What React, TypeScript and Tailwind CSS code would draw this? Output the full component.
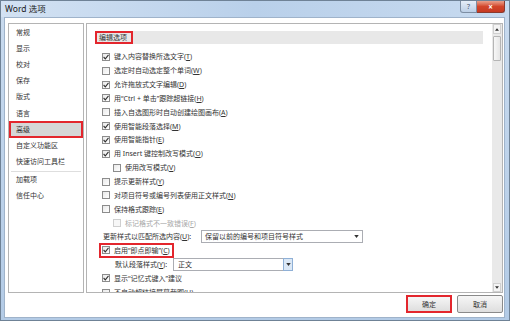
import React from "react";

const Check = ({ checked, disabled }: { checked?: boolean; disabled?: boolean }) => (
  <span
    className={`relative inline-block w-[8px] h-[8px] shrink-0 border ${
      disabled ? "border-[#cfcfcf] bg-[#f7f7f7]" : "border-[#8c8c8c] bg-gradient-to-br from-[#e9e9e9] to-white"
    }`}
  >
    {checked && (
      <svg viewBox="0 0 6 6" className="absolute left-0 top-0 w-[6px] h-[6px]">
        <path d="M0.6 3 L2.3 4.8 L5.5 0.8" fill="none" stroke="#333333" strokeWidth="1.1" />
      </svg>
    )}
  </span>
);

const Row = ({
  checked,
  children,
  indent,
  disabled,
}: {
  checked?: boolean;
  children: React.ReactNode;
  indent?: boolean;
  disabled?: boolean;
}) => (
  <div className={`h-[13.85px] flex items-center gap-[4px] ${indent ? "pl-[26px]" : "pl-[15px]"}`}>
    <Check checked={checked} disabled={disabled} />
    <span className={`whitespace-nowrap ${disabled ? "text-[#a8a8a8]" : ""}`}>{children}</span>
  </div>
);

const navItems = ["常规", "显示", "校对", "保存", "版式", "语言", "高级", "自定义功能区", "快速访问工具栏"];

export default function App() {
  return (
    <div className="w-[510px] h-[321px] overflow-hidden relative bg-gradient-to-b from-[#c9dbef] to-[#b3cbe6] border border-[#6f8296] font-['Noto_Sans','Noto_Sans_CJK_SC',sans-serif] text-[#333333] leading-none">
      {/* title bar */}
      <div className="h-[16px] flex items-center pl-[4px] text-[8.5px] text-[#1a1a1a] bg-gradient-to-r from-[#d3e2f3] via-[#b9d0ea] to-[#c7daef]">
        Word 选项
      </div>
      <div className="absolute top-0 right-[4px] flex">
        <div className="w-[17px] h-[12px] rounded-bl-[3px] border border-t-0 border-[#7d8ea3] bg-gradient-to-b from-[#e6eef8] to-[#bccfe6] flex items-center justify-center text-[7px] text-[#4a5a6e]">
          ?
        </div>
        <div className="w-[28px] h-[12px] rounded-br-[3px] border border-l-0 border-t-0 border-[#8a3a2e] bg-gradient-to-b from-[#e8a08c] via-[#d2452a] to-[#c63a22] flex items-center justify-center text-[8px] font-bold text-white">
          ×
        </div>
      </div>

      {/* inner */}
      <div className="ml-[3px] mr-[4px] h-[301px] bg-white border border-[#9fb3ca] pt-[5px] pl-[3px] text-[7px]">
        <div className="flex gap-[2px]">
          {/* nav */}
          <div className="w-[76px] h-[270px] border border-[#b4b4b4]">
            {navItems.map((t) => (
              <div key={t} className="h-[16.2px] flex items-center">
                {t === "高级" ? (
                  <div className="w-full h-[17px] border-2 border-[#e3262d] bg-[#d6d6d6] flex items-center pl-[5px]">
                    <span>{t}</span>
                  </div>
                ) : (
                  <span className="pl-[7px]">{t}</span>
                )}
              </div>
            ))}
            <div className="h-[2px] flex items-end px-[2px]">
              <div className="w-full h-[1px] bg-[#dedede]" />
            </div>
            {["加载项", "信任中心"].map((t) => (
              <div key={t} className="h-[16.2px] flex items-center pl-[7px]">
                {t}
              </div>
            ))}
          </div>

          {/* right panel */}
          <div className="w-[417px] h-[270px] border border-[#b4b4b4] flex overflow-hidden">
            <div className="flex-1 overflow-hidden">
              <div className="mt-[7px] ml-[8px] w-[388px] h-[13px] bg-[#e8e8e8] flex">
                <div className="h-[13px] w-[38px] border-2 border-[#e3262d] flex items-center pl-[2px] whitespace-nowrap">
                  编辑选项
                </div>
              </div>
              <div className="mt-[6px]">
                <Row checked>键入内容替换所选文字(<u>T</u>)</Row>
                <Row>选定时自动选定整个单词(<u>W</u>)</Row>
                <Row checked>允许拖放式文字编辑(<u>D</u>)</Row>
                <Row checked>用“Ctrl + 单击”跟踪超链接(<u>H</u>)</Row>
                <Row>插入自选图形时自动创建绘图画布(<u>A</u>)</Row>
                <Row checked>使用智能段落选择(<u>M</u>)</Row>
                <Row checked>使用智能指针(<u>E</u>)</Row>
                <Row checked>用 Insert 键控制改写模式(<u>O</u>)</Row>
                <Row indent>使用改写模式(<u>V</u>)</Row>
                <Row>提示更新样式(<u>Y</u>)</Row>
                <Row>对项目符号或编号列表使用正文样式(<u>N</u>)</Row>
                <Row>保持格式跟踪(<u>E</u>)</Row>
                <Row indent disabled>标记格式不一致错误(<u>F</u>)</Row>
                <div className="h-[13px] flex items-center pl-[16px]">
                  <span className="w-[98px] whitespace-nowrap">更新样式以匹配所选内容(<u>U</u>):</span>
                  <div className="w-[162px] h-[13px] border border-[#abadb3] flex items-center justify-between pl-[3px] pr-[3px]">
                    <span className="whitespace-nowrap">保留以前的编号和项目符号样式</span>
                    <svg viewBox="0 0 6 4" className="w-[5px] h-[3px]">
                      <path d="M0 0 H6 L3 4 Z" fill="#333" />
                    </svg>
                  </div>
                </div>
                <div className="h-[15px] flex items-center pl-[12px]">
                  <div className="h-[15px] inline-flex items-center gap-[4px] pl-[1px] pr-[2px] border-2 border-[#e3262d]">
                    <Check checked />
                    <span className="whitespace-nowrap">启用“即点即输”(<u>C</u>)</span>
                  </div>
                </div>
                <div className="h-[13px] flex items-center pl-[28px]">
                  <span className="w-[58px] whitespace-nowrap">默认段落样式(<u>Y</u>):</span>
                  <div className="w-[120px] h-[13px] border border-[#abadb3] flex items-center">
                    <span className="flex-1 pl-[4px]">正文</span>
                    <div className="w-[10px] h-[13px] -my-[1px] -mr-[1px] border border-[#8fb0d6] bg-[#dbe8f6] flex items-center justify-center">
                      <svg viewBox="0 0 6 4" className="w-[5px] h-[3px]">
                        <path d="M0 0 H6 L3 4 Z" fill="#333" />
                      </svg>
                    </div>
                  </div>
                </div>
                <div className="h-[15px] flex items-center gap-[4px] pl-[15px]">
                  <Check checked />
                  <span className="whitespace-nowrap">显示“记忆式键入”建议</span>
                </div>
                <Row>不自动超链接屏幕截图(<u>H</u>)</Row>
              </div>
            </div>
            {/* scrollbar */}
            <div className="w-[10px] h-full bg-[#e9e9e9] flex flex-col items-center">
              <div className="w-[8px] h-[10px] bg-[#f4f4f4] border border-[#d0d0d0] flex items-center justify-center">
                <svg viewBox="0 0 6 4" className="w-[4px] h-[3px]">
                  <path d="M0 4 H6 L3 0 Z" fill="#333" />
                </svg>
              </div>
              <div className="w-[8px] h-[25px] mt-[2px] bg-gradient-to-r from-[#f7f7f7] to-[#e6e6e6] border border-[#b5b5b5] rounded-[1px]" />
              <div className="flex-1" />
              <div className="w-[8px] h-[9px] bg-[#f4f4f4] border border-[#d0d0d0] flex items-center justify-center">
                <svg viewBox="0 0 6 4" className="w-[4px] h-[3px]">
                  <path d="M0 0 H6 L3 4 Z" fill="#333" />
                </svg>
              </div>
            </div>
          </div>
        </div>

        {/* buttons */}
        <div className="mt-[2px] flex justify-end gap-[5px] pr-[1px]">
          <div className="w-[46px] h-[18px] border-2 border-[#e3262d] bg-gradient-to-b from-[#f6f6f6] to-[#dedede] flex items-center justify-center">
            确定
          </div>
          <div className="w-[46px] h-[18px] border border-[#8a8a8a] rounded-[2px] bg-gradient-to-b from-[#f6f6f6] to-[#dedede] flex items-center justify-center">
            取消
          </div>
        </div>
      </div>
    </div>
  );
}
